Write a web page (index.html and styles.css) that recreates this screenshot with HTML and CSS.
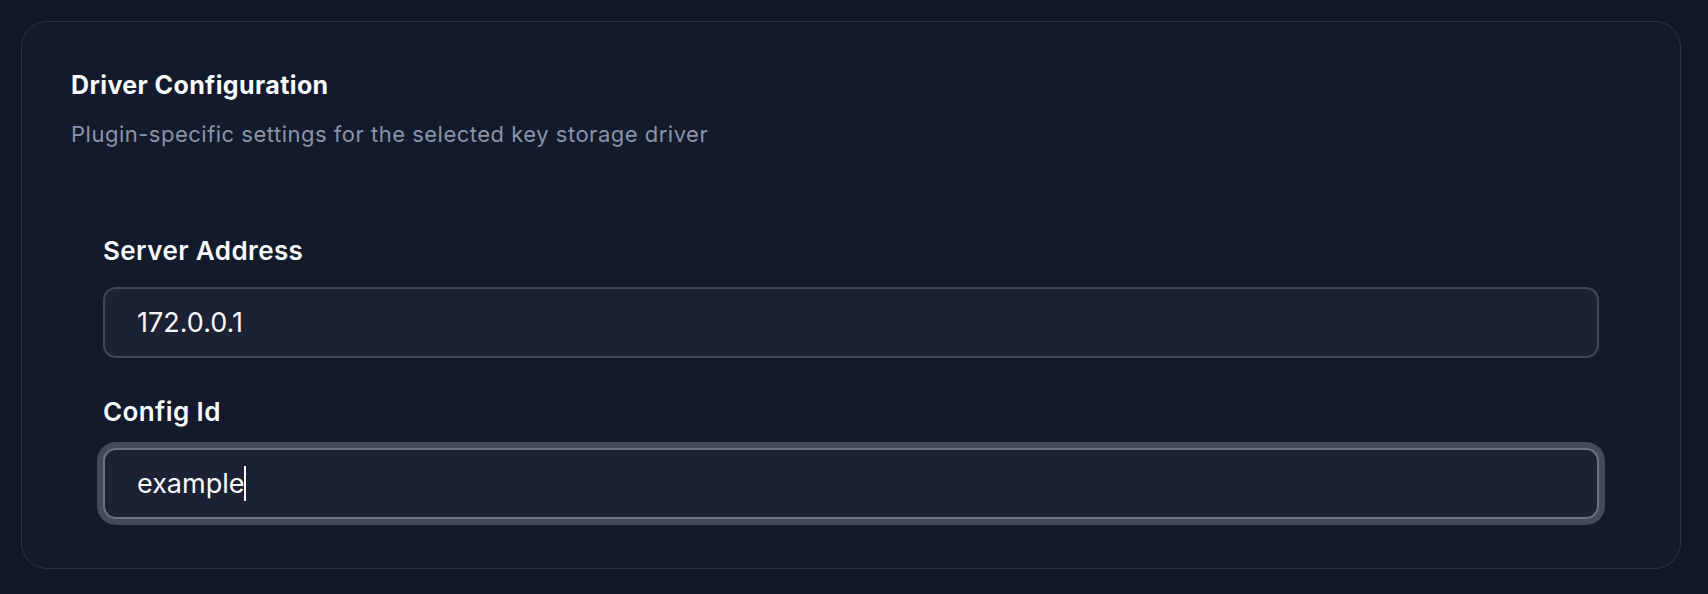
FILE: index.html
```html
<!DOCTYPE html>
<html lang="en">
<head>
    <meta charset="UTF-8">
    <meta name="viewport" content="width=device-width, initial-scale=1.0">
    <title>Driver Configuration</title>
    <link rel="stylesheet" href="styles.css">
</head>
<body>
    <div class="page">
        <section class="config-card">
            <div class="card-header">
                <h2>Driver Configuration</h2>
                <p>Plugin-specific settings for the selected key storage driver</p>
            </div>

            <div class="fields">
                <div class="field">
                    <label for="serverAddress">Server Address</label>
                    <input type="text" id="serverAddress" class="text-input" value="172.0.0.1">
                </div>
                <div class="field">
                    <label>Config Id</label>
                    <!-- focused state, caret drawn by hand so it shows in a still -->
                    <div class="text-input is-focused" role="textbox">
                        <span>example</span><span class="caret"></span>
                    </div>
                </div>
            </div>
        </section>
    </div>
</body>
</html>
```

FILE: styles.css
```css
* {
    margin: 0;
    padding: 0;
    box-sizing: border-box;
}

body {
    background-color: #111628;
    font-family: Inter, "Noto Sans", sans-serif;
    color: #f8fafc;
}

.page {
    padding: 21px 27px 26px 21px;
}

.config-card {
    background: #131a2c;
    border: 1px solid #2c3245;
    border-radius: 26px;
    padding: 47px 49px 49px;
}

.card-header h2 {
    font-size: 25px;
    line-height: 32px;
    font-weight: 700;
    letter-spacing: 0.4px;
}

.card-header p {
    margin-top: 18px;
    font-size: 22px;
    line-height: 30px;
    letter-spacing: 0.5px;
    color: #8a93a8;
}

.fields {
    padding: 86px 32px 0;
    display: flex;
    flex-direction: column;
    gap: 38px;
}

.field {
    display: flex;
    flex-direction: column;
    gap: 20px;
}

.field label {
    font-size: 26px;
    line-height: 32px;
    font-weight: 600;
    letter-spacing: 0.4px;
}

.text-input {
    display: flex;
    align-items: center;
    height: 71px;
    padding: 0 32px;
    background: #1c2133;
    border: 2px solid #41475a;
    border-radius: 13px;
    color: #f8fafc;
    font-family: inherit;
    font-size: 27px;
    outline: none;
}

.text-input.is-focused {
    border-color: #6b7182;
    box-shadow: 0 0 0 6px #444a5c;
}

.caret {
    display: inline-block;
    width: 2px;
    height: 35px;
    margin-left: -1px;
    background: #f8fafc;
}
```
